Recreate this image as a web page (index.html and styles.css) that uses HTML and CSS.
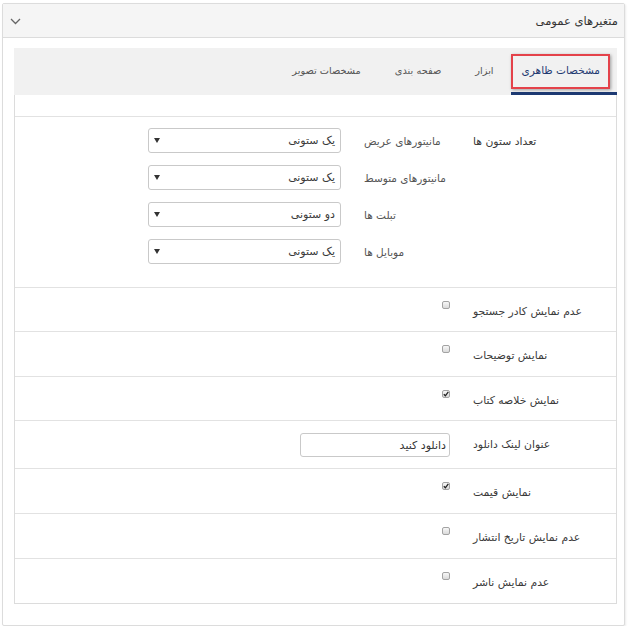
FILE: index.html
```html
<!DOCTYPE html>
<html lang="fa" dir="rtl">
<head>
<meta charset="utf-8">
<title>متغیرهای عمومی</title>
<link rel="stylesheet" href="styles.css">
</head>
<body>
<div class="panel">
  <div class="panel-head">
    <h2 class="panel-title">متغیرهای عمومی</h2>
    <svg class="chev" width="11" height="7" viewBox="0 0 11 7"><path d="M1 1 L5.5 5.5 L10 1" fill="none" stroke="#666" stroke-width="1.3"/></svg>
  </div>
  <div class="panel-body">
    <div class="tabs">
      <div class="tab-bar">
        <div class="tab active">مشخصات ظاهری<span class="mark"></span></div>
        <div class="tab">ابزار</div>
        <div class="tab">صفحه بندی</div>
        <div class="tab">مشخصات تصویر</div>
      </div>
      <div class="tab-content">
        <div class="spacer"></div>
        <div class="row row-cols">
          <div class="label">تعداد ستون ها</div>
          <div class="field subs">
            <div class="sub"><span class="sublabel">مانیتورهای عریض</span><div class="select"><span>یک ستونی</span><svg class="arrow" width="6" height="5" viewBox="0 0 6 5"><path d="M0 0 H6 L3 5 Z" fill="#333"/></svg></div></div>
            <div class="sub"><span class="sublabel">مانیتورهای متوسط</span><div class="select"><span>یک ستونی</span><svg class="arrow" width="6" height="5" viewBox="0 0 6 5"><path d="M0 0 H6 L3 5 Z" fill="#333"/></svg></div></div>
            <div class="sub"><span class="sublabel">تبلت ها</span><div class="select"><span>دو ستونی</span><svg class="arrow" width="6" height="5" viewBox="0 0 6 5"><path d="M0 0 H6 L3 5 Z" fill="#333"/></svg></div></div>
            <div class="sub"><span class="sublabel">موبایل ها</span><div class="select"><span>یک ستونی</span><svg class="arrow" width="6" height="5" viewBox="0 0 6 5"><path d="M0 0 H6 L3 5 Z" fill="#333"/></svg></div></div>
          </div>
        </div>
        <div class="row h43">
          <div class="label">عدم نمایش کادر جستجو</div>
          <div class="field"><span class="cb"></span></div>
        </div>
        <div class="row">
          <div class="label">نمایش توضیحات</div>
          <div class="field"><span class="cb"></span></div>
        </div>
        <div class="row h43">
          <div class="label">نمایش خلاصه کتاب</div>
          <div class="field"><span class="cb checked"><svg width="6" height="6" viewBox="0 0 6 6"><path d="M0.8 3.2 L2.4 4.8 L5.3 0.9" fill="none" stroke="#222" stroke-width="1.3"/></svg></span></div>
        </div>
        <div class="row h47">
          <div class="label">عنوان لینک دانلود</div>
          <div class="field"><input class="text" type="text" value="دانلود کنید"></div>
        </div>
        <div class="row">
          <div class="label">نمایش قیمت</div>
          <div class="field"><span class="cb checked"><svg width="6" height="6" viewBox="0 0 6 6"><path d="M0.8 3.2 L2.4 4.8 L5.3 0.9" fill="none" stroke="#222" stroke-width="1.3"/></svg></span></div>
        </div>
        <div class="row">
          <div class="label">عدم نمایش تاریخ انتشار</div>
          <div class="field"><span class="cb"></span></div>
        </div>
        <div class="row last">
          <div class="label">عدم نمایش ناشر</div>
          <div class="field"><span class="cb"></span></div>
        </div>
      </div>
    </div>
  </div>
</div>
</body>
</html>
```

FILE: styles.css
```css
* { box-sizing: border-box; }
html, body { margin: 0; padding: 0; background: #fff; }
body {
  direction: rtl;
  font-family: "DejaVu Sans", "Noto Sans", sans-serif;
  color: #333;
}
.panel {
  margin: 3px 5px 0 2px;
  width: 623px;
  height: 623px;
  border: 1px solid #dcdcdc;
  border-radius: 2px;
  background: #fff;
  box-shadow: 1px 1px 2px rgba(0,0,0,0.08);
}
.panel-head {
  height: 34px;
  background: #f5f5f5;
  border-bottom: 1px solid #dcdcdc;
  display: flex;
  align-items: center;
  justify-content: space-between;
  padding: 0 6px 0 7px;
}
.panel-title {
  margin: 0;
  font-size: 11.5px;
  font-weight: normal;
  color: #333;
}
.chev { display: block; margin-top: 2px; }
.panel-body {
  padding: 10px 7px 0 11px;
}
.tabs { width: 603px; }
.tab-bar {
  height: 47px;
  background: #f1f1f1;
  display: flex;
  align-items: stretch;
}
.tab {
  position: relative;
  display: flex;
  align-items: center;
  padding: 0 17px 2px;
  font-size: 9.8px;
  color: #555;
}
.tab.active {
  padding: 0 17px 0 11px;
  font-size: 10.5px;
  color: #1f3a72;
  border-bottom: 3px solid #1d3a73;
}
.mark {
  position: absolute;
  top: 6px;
  right: 7px;
  left: 0;
  bottom: 3px;
  border: 2px solid #e4424a;
  box-shadow: 1px 1px 3px rgba(0,0,0,0.35);
}
.tab-content {
  border: 1px solid #dcdcdc;
  border-top: none;
}
.spacer {
  height: 22px;
  border-bottom: 1px solid #e2e2e2;
}
.row {
  display: grid;
  grid-template-columns: 143px 1fr;
  height: 45px;
  border-bottom: 1px solid #e2e2e2;
}
.row.h43 { height: 44px; }
.row.h47 { height: 48px; }
.row.last { height: 44px; border-bottom: none; }
.row-cols { height: 171px; }
.label {
  text-align: left;
  font-size: 10.8px;
  line-height: 18px;
  padding-top: 15px;
  color: #3a3a3a;
}
.row-cols .label { padding-top: 16px; }
.field {
  padding-right: 23px;
  display: flex;
  align-items: flex-start;
}
.subs {
  flex-direction: column;
  gap: 12px;
  padding-top: 11px;
}
.sub {
  display: flex;
  align-items: center;
  gap: 23px;
}
.sublabel {
  width: 86px;
  text-align: left;
  font-size: 10.5px;
  color: #555;
}
.select {
  width: 193px;
  height: 25px;
  border: 1px solid #c9c9c9;
  border-radius: 3px;
  background: #fff;
  display: flex;
  align-items: center;
  justify-content: space-between;
  padding: 0 5px 0 5px;
  font-size: 11px;
  color: #3a3a3a;
}
.arrow { display: block; }
.cb {
  display: flex;
  align-items: center;
  justify-content: center;
  width: 8px;
  height: 8px;
  margin-top: 13px;
  border: 1px solid #a3a3a3;
  border-radius: 2px;
  background: linear-gradient(#f7f7f7, #dadada);
}
.cb svg { display: block; }
.text {
  margin: 12px 0 0;
  width: 150px;
  height: 24px;
  border: 1px solid #c9c9c9;
  border-radius: 3px;
  padding: 0 3px;
  font-family: inherit;
  font-size: 11px;
  color: #333;
  direction: rtl;
  text-align: right;
  outline: none;
}
```
